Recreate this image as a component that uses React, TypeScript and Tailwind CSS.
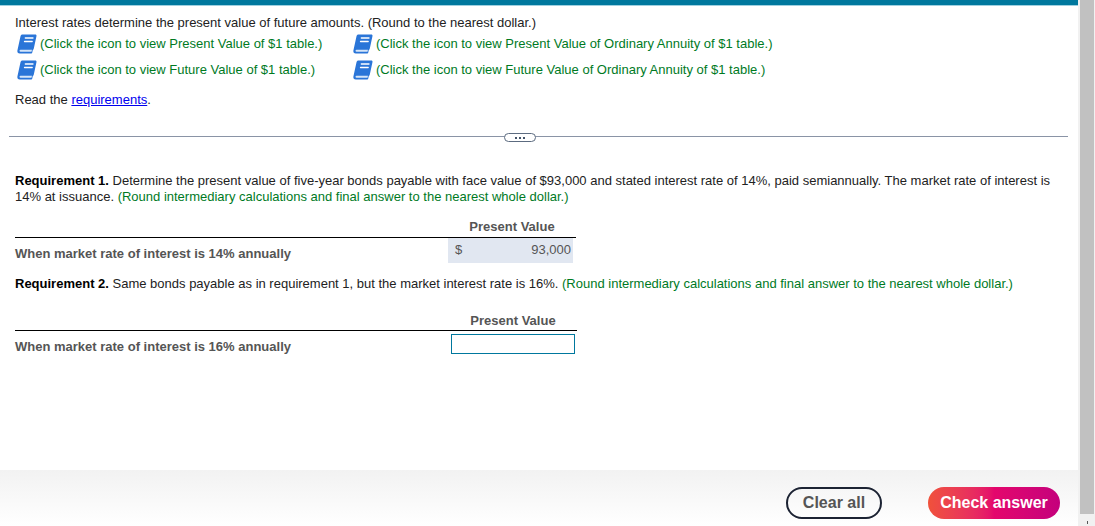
import React from 'react';

function BookIcon() {
  return (
    <svg width="20" height="20" viewBox="0 0 20 20" className="shrink-0">
      <path d="M5.500.5H18.200c1 0 1.500.6 1.300 1.500L16.800 14.500c-.2.8-.5 1.200-1 1.500l-.6 2.700c-.1.500-.4.800-.9.800H2.800C1 19.500.1 18.300.4 16.500L3.500 2.300C3.800 1.100 4.500.5 5.500.5z" fill="#2a75d8" />
      <path d="M3.500 15.800H15l-.5 2H3.500c-1.300 0-1.300-2 0-2z" fill="#d5e5f8" />
      <path d="M8.300 4h7.700M7.500 7.500h7.700" stroke="#fff" strokeWidth="1.300" strokeLinecap="round" />
    </svg>
  );
}

function TableLink({ label }: { label: string }) {
  return (
    <div className="flex items-center">
      <BookIcon />
      <span className="ml-[3px] text-[#007a1f]">(Click the icon to view {label} table.)</span>
    </div>
  );
}

function ResultHeader({ offset, pad }: { offset: string; pad: string }) {
  return (
    <div className="flex border-b border-black">
      <div className={offset} />
      <div className={`w-[128px] text-center font-bold text-[#555] ${pad}`}>Present Value</div>
    </div>
  );
}

export default function App() {
  return (
    <div className="flex h-[526px] w-full overflow-hidden bg-white font-['Liberation_Sans',Arial,sans-serif] text-[13px] leading-[16px] text-[#222]">
      <div className="flex min-w-0 flex-1 flex-col">
        <div className="h-[6px] shrink-0 border-b border-[#9fd0e0] bg-[#00789e]" />

        <div className="flex-1 px-[15px]">
          <p className="mt-[9px]">Interest rates determine the present value of future amounts. (Round to the nearest dollar.)</p>

          <div className="mt-[3px] grid w-[800px] grid-cols-[336px_1fr] gap-y-[6px] pl-[2px]">
            <TableLink label="Present Value of $1" />
            <TableLink label="Present Value of Ordinary Annuity of $1" />
            <TableLink label="Future Value of $1" />
            <TableLink label="Future Value of Ordinary Annuity of $1" />
          </div>

          <p className="mt-[12px]">
            Read the <a className="text-[#0000ee] underline">requirements</a>.
          </p>

          <div className="relative mt-[28px] -ml-[6px] mr-[-5px] border-t border-[#8a94a6]">
            <div className="absolute left-[495px] top-[-4px] flex h-[9px] w-[32px] items-center justify-center gap-[2px] rounded-full border border-[#5c6b80] bg-white">
              <span className="h-[2px] w-[2px] bg-[#44546a]" />
              <span className="h-[2px] w-[2px] bg-[#44546a]" />
              <span className="h-[2px] w-[2px] bg-[#44546a]" />
            </div>
          </div>

          <p className="mt-[36px] w-[1045px]">
            <b className="text-black">Requirement 1.</b> Determine the present value of five-year bonds payable with face value of $93,000 and stated interest rate of 14%, paid semiannually. The market rate of interest is 14% at issuance.{' '}
            <span className="text-[#007a1f]">(Round intermediary calculations and final answer to the nearest whole dollar.)</span>
          </p>

          <div className="mt-[14px] w-[561px]">
            <ResultHeader offset="w-[433px]" pad="pb-[2px]" />
            <div className="flex h-[25px]">
              <div className="w-[433px] pt-[8px] font-bold text-[#555]">When market rate of interest is 14% annually</div>
              <div className="flex w-[125px] justify-between bg-[#e1e7f1] pl-[7px] pr-[2px] pt-[4px] text-[#555]">
                <span>$</span>
                <span>93,000</span>
              </div>
            </div>
          </div>

          <p className="mt-[13px]">
            <b className="text-black">Requirement 2.</b> Same bonds payable as in requirement 1, but the market interest rate is 16%.{' '}
            <span className="text-[#007a1f]">(Round intermediary calculations and final answer to the nearest whole dollar.)</span>
          </p>

          <div className="mt-[21px] w-[562px]">
            <ResultHeader offset="w-[434px]" pad="pb-[1px]" />
            <div className="flex pt-[3px]">
              <div className="w-[436px] pt-[5px] font-bold text-[#555]">When market rate of interest is 16% annually</div>
              <input className="h-[20px] w-[124px] border border-[#00789e] bg-white outline-none" />
            </div>
          </div>
        </div>

        <div className="flex h-[56px] shrink-0 items-start justify-end bg-gradient-to-b from-[#f2f2f2] to-white pr-[18px] pt-[17px]">
          <button className="h-[32px] w-[96px] rounded-full border-2 border-[#1c2333] bg-white/0 text-[16px] font-bold text-[#555]">Clear all</button>
          <button className="ml-[46px] h-[32px] w-[132px] rounded-full bg-gradient-to-r from-[#f0513a] via-[#e4066c] to-[#c4007c] text-[16px] font-bold text-white">Check answer</button>
        </div>
      </div>

      <div className="flex w-[17px] shrink-0 flex-col bg-[#f1f1f1] pl-[2px]">
        <div className="h-[514px] w-[14px] bg-[#c1c1c1]" />
        <div className="mx-auto mt-[7px] h-[3px] w-[1px] bg-[#555]" />
      </div>
    </div>
  );
}
